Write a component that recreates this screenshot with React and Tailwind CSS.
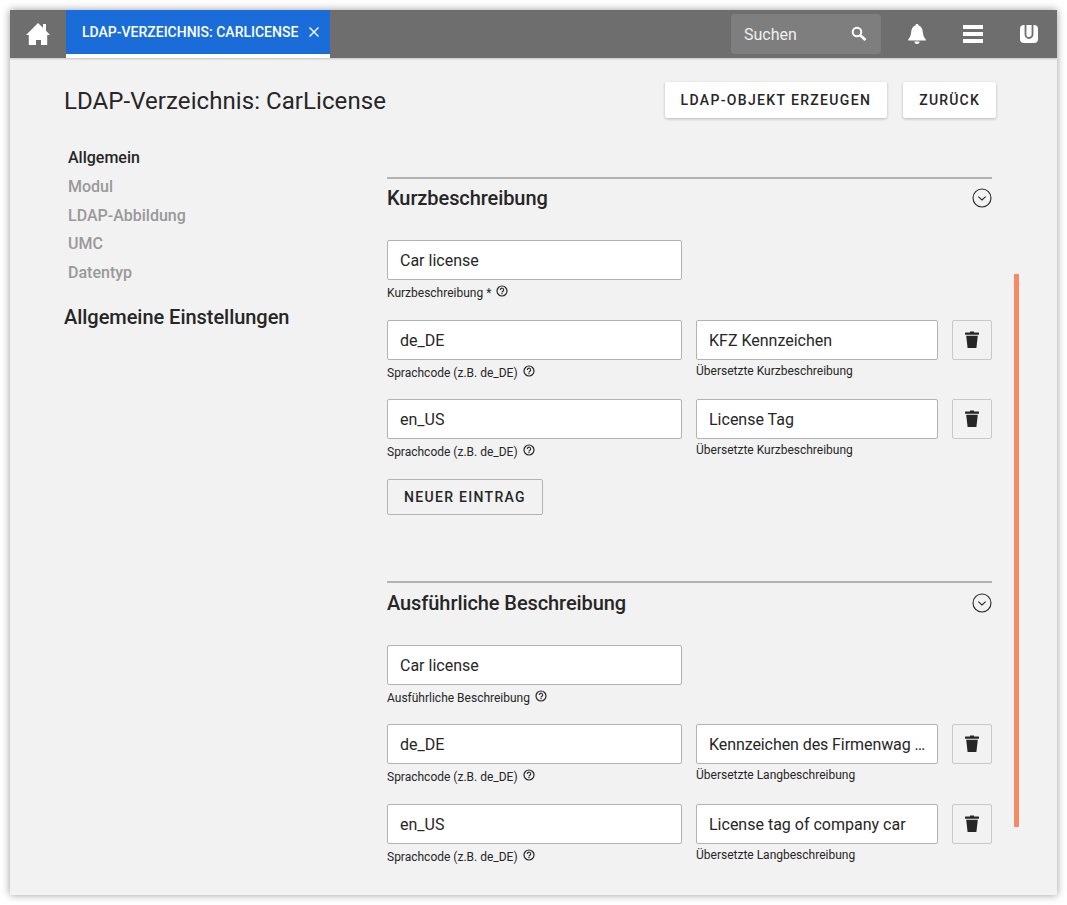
import React from "react";

const Help = () => (
  <svg width="12" height="12" viewBox="0 0 12 12" className="ml-[5px] -translate-y-[2px] inline-block shrink-0" fill="none">
    <circle cx="6" cy="6" r="5" stroke="#262626" strokeWidth="1.2" />
    <path d="M4.300 4.900a1.700 1.700 0 1 1 2.600 1.400c-.6.400-.9.600-.9 1.200" stroke="#262626" strokeWidth="1.100" />
    <rect x="5.400" y="8" width="1.200" height="1.200" fill="#262626" />
  </svg>
);

const Trash = () => (
  <svg width="16" height="18" viewBox="0 0 16 18" fill="#262626">
    <rect x="6" y="0.5" width="4" height="2" />
    <rect x="1" y="1.500" width="14" height="2.200" rx="0.5" />
    <path d="M2.200 4.800h11.600L12.400 17H3.600z" />
  </svg>
);

const Chevron = () => (
  <svg width="20" height="20" viewBox="0 0 20 20" fill="none">
    <circle cx="10" cy="10" r="9" stroke="#262626" strokeWidth="1.100" />
    <path d="M6.300 8.600 10 12l3.700-3.400" stroke="#262626" strokeWidth="1.100" />
  </svg>
);

const Input = ({ value }) => (
  <div className="h-10 bg-white border border-[#b3b3b3] rounded-[2px] px-3 pt-px flex items-center text-[16px] text-[#262626] overflow-hidden whitespace-nowrap">
    {value}
  </div>
);

const Field = ({ value, label, help, width }) => (
  <div className={width}>
    <Input value={value} />
    <div className="h-[22px] mt-[2px] flex items-center text-[12px] leading-4 text-[#262626]">
      {label}
      {help && <Help />}
    </div>
  </div>
);

const Row = ({ left, right, rightLabel, mb }) => (
  <div className={`flex ${mb}`}>
    <Field value={left} label="Sprachcode (z.B. de_DE)" help width="w-[295px]" />
    <div className="w-[242px] ml-[14px]">
      <Input value={right} />
      <div className="h-[17px] mt-[2px] flex items-center text-[12px] leading-4 text-[#262626]">{rightLabel}</div>
    </div>
    <div className="w-10 h-10 ml-[14px] border border-[#c8c8c8] rounded-[2px] flex items-center justify-center">
      <Trash />
    </div>
  </div>
);

const SectionHead = ({ title, h, titleMt }) => (
  <div className={`border-t-2 border-[#b3b3b3] ${h} flex items-start justify-between`}>
    <div className={`text-[20px] font-medium leading-[24px] ${titleMt} tracking-[-0.08px] text-[#262626]`}>{title}</div>
    <div className={titleMt === "mt-[7px]" ? "mt-[9px]" : "mt-[10px]"}><Chevron /></div>
  </div>
);

export default function App() {
  return (
    <div className="w-[1067px] h-[905px] bg-white p-[10px] overflow-hidden" style={{ fontFamily: "Roboto, sans-serif" }}>
      <div className="relative w-[1047px] h-[885px] bg-[#f2f2f2] overflow-hidden shadow-[0_0_8px_rgba(0,0,0,0.4)]">
        <div className="h-12 bg-[#6e6e6e] flex items-center text-white shadow-[0_1px_2px_rgba(0,0,0,0.2)]">
          <div className="w-14 flex items-center justify-center">
            <svg width="24" height="22" viewBox="0 0 24 22" fill="#fff">
              <path d="M12 0 17 4.800V1h3v6.700L24 12h-2.800v10H15v-5h-5v5H2.800V12H0z" />
            </svg>
          </div>
          <div className="w-[264px] h-12 bg-[#1a6dd8] border-b-4 border-white flex items-center pl-4 text-[14px] font-medium whitespace-nowrap">
            LDAP-VERZEICHNIS: CARLICENSE
            <svg width="10" height="10" viewBox="0 0 10 10" className="ml-[11px]" stroke="#fff" strokeWidth="1.400">
              <path d="M.5.5l9 9M9.500.5l-9 9" />
            </svg>
          </div>
          <div className="w-[150px] h-10 ml-[401px] bg-[#7e7e7e] rounded-[4px] flex items-center justify-between pl-[13px] pr-[14px] text-[16px] text-[#f0f0f0]">
            <span className="translate-y-px">Suchen</span>
            <svg width="16" height="16" viewBox="0 0 16 16" fill="none" stroke="#fff">
              <circle cx="6" cy="6" r="4.300" strokeWidth="2" />
              <path d="M9.500 9.500 14.500 14" strokeWidth="2.800" />
            </svg>
          </div>
          <svg width="18" height="20" viewBox="0 0 18 20" fill="#fff" className="ml-[27px]">
            <path d="M9 0c1 0 1.600.7 1.700 1.600C13.500 2.400 14.500 5 14.800 8c.3 3 .9 5 3 7.500V16.500H.2V15.500C2.300 13 2.900 11 3.200 8 3.500 5 4.500 2.400 7.300 1.600 7.400.7 8 0 9 0z" />
            <path d="M6.500 17.500h5A2.500 2.500 0 0 1 9 20a2.500 2.500 0 0 1-2.500-2.500z" />
          </svg>
          <div className="ml-[37px] w-5 flex flex-col gap-[3px]">
            <div className="h-1 bg-white" />
            <div className="h-1 bg-white" />
            <div className="h-1 bg-white" />
          </div>
          <svg width="18" height="20" viewBox="0 0 18 20" className="ml-[37px]" fill="none">
            <rect x="0" y="1" width="18" height="18" rx="4" fill="#fff" />
            <path d="M5.500 0.800V10.500a3.500 3.500 0 0 0 7 0V0.800" stroke="#6e6e6e" strokeWidth="1.800" />
          </svg>
        </div>

        <div className="flex items-center justify-between pl-[54px] pr-[61px] pt-6">
          <div className="text-[24px] text-[#262626] leading-9 tracking-[0.07px] translate-y-[1px]">LDAP-Verzeichnis: CarLicense</div>
          <div className="flex gap-4">
            <div className="h-9 px-4 bg-white rounded-[2px] shadow-[0_1px_3px_rgba(0,0,0,0.25)] flex items-center text-[14px] font-medium tracking-[1.34px] text-[#262626]">LDAP-OBJEKT ERZEUGEN</div>
            <div className="h-9 px-4 bg-white rounded-[2px] shadow-[0_1px_3px_rgba(0,0,0,0.25)] flex items-center text-[14px] font-medium tracking-[1.2px] text-[#262626]">ZURÜCK</div>
          </div>
        </div>

        <div className="flex pl-[54px] mt-[26px]">
          <div className="w-[323px]">
            <div className="pl-1 text-[16px] font-medium leading-[28.8px] text-[#999999]">
              <div className="text-[#262626]">Allgemein</div>
              <div>Modul</div>
              <div>LDAP-Abbildung</div>
              <div>UMC</div>
              <div>Datentyp</div>
            </div>
            <div className="text-[20px] font-medium leading-6 mt-[17px] tracking-[-0.04px] text-[#262626]">Allgemeine Einstellungen</div>
          </div>
          <div className="w-[605px] pt-[33px]">
            <SectionHead title="Kurzbeschreibung" h="h-[63px]" titleMt="mt-[7px]" />
            <Field value="Car license" label={"Kurzbeschreibung *"} help width="w-[295px] mb-4" />
            <Row left="de_DE" right="KFZ Kennzeichen" rightLabel="Übersetzte Kurzbeschreibung" mb="mb-[15px]" />
            <Row left="en_US" right="License Tag" rightLabel="Übersetzte Kurzbeschreibung" mb="mb-4" />
            <div className="w-[156px] h-9 border border-[#b3b3b3] rounded-[2px] flex items-center justify-center text-[14px] font-medium tracking-[1.3px] text-[#262626]">NEUER EINTRAG</div>
            <div className="h-[66px]" />
            <SectionHead title="Ausführliche Beschreibung" h="h-[64px]" titleMt="mt-[8px]" />
            <Field value="Car license" label="Ausführliche Beschreibung" help width="w-[295px] mb-[15px]" />
            <Row left="de_DE" right={<span className="tracking-[-0.08px]">Kennzeichen des Firmenwag …</span>} rightLabel="Übersetzte Langbeschreibung" mb="mb-4" />
            <Row left="en_US" right="License tag of company car" rightLabel="Übersetzte Langbeschreibung" mb="" />
          </div>
        </div>

        <div className="absolute left-[1004px] top-[264px] w-[5px] h-[553px] bg-[#f48b62]" />
      </div>
    </div>
  );
}
